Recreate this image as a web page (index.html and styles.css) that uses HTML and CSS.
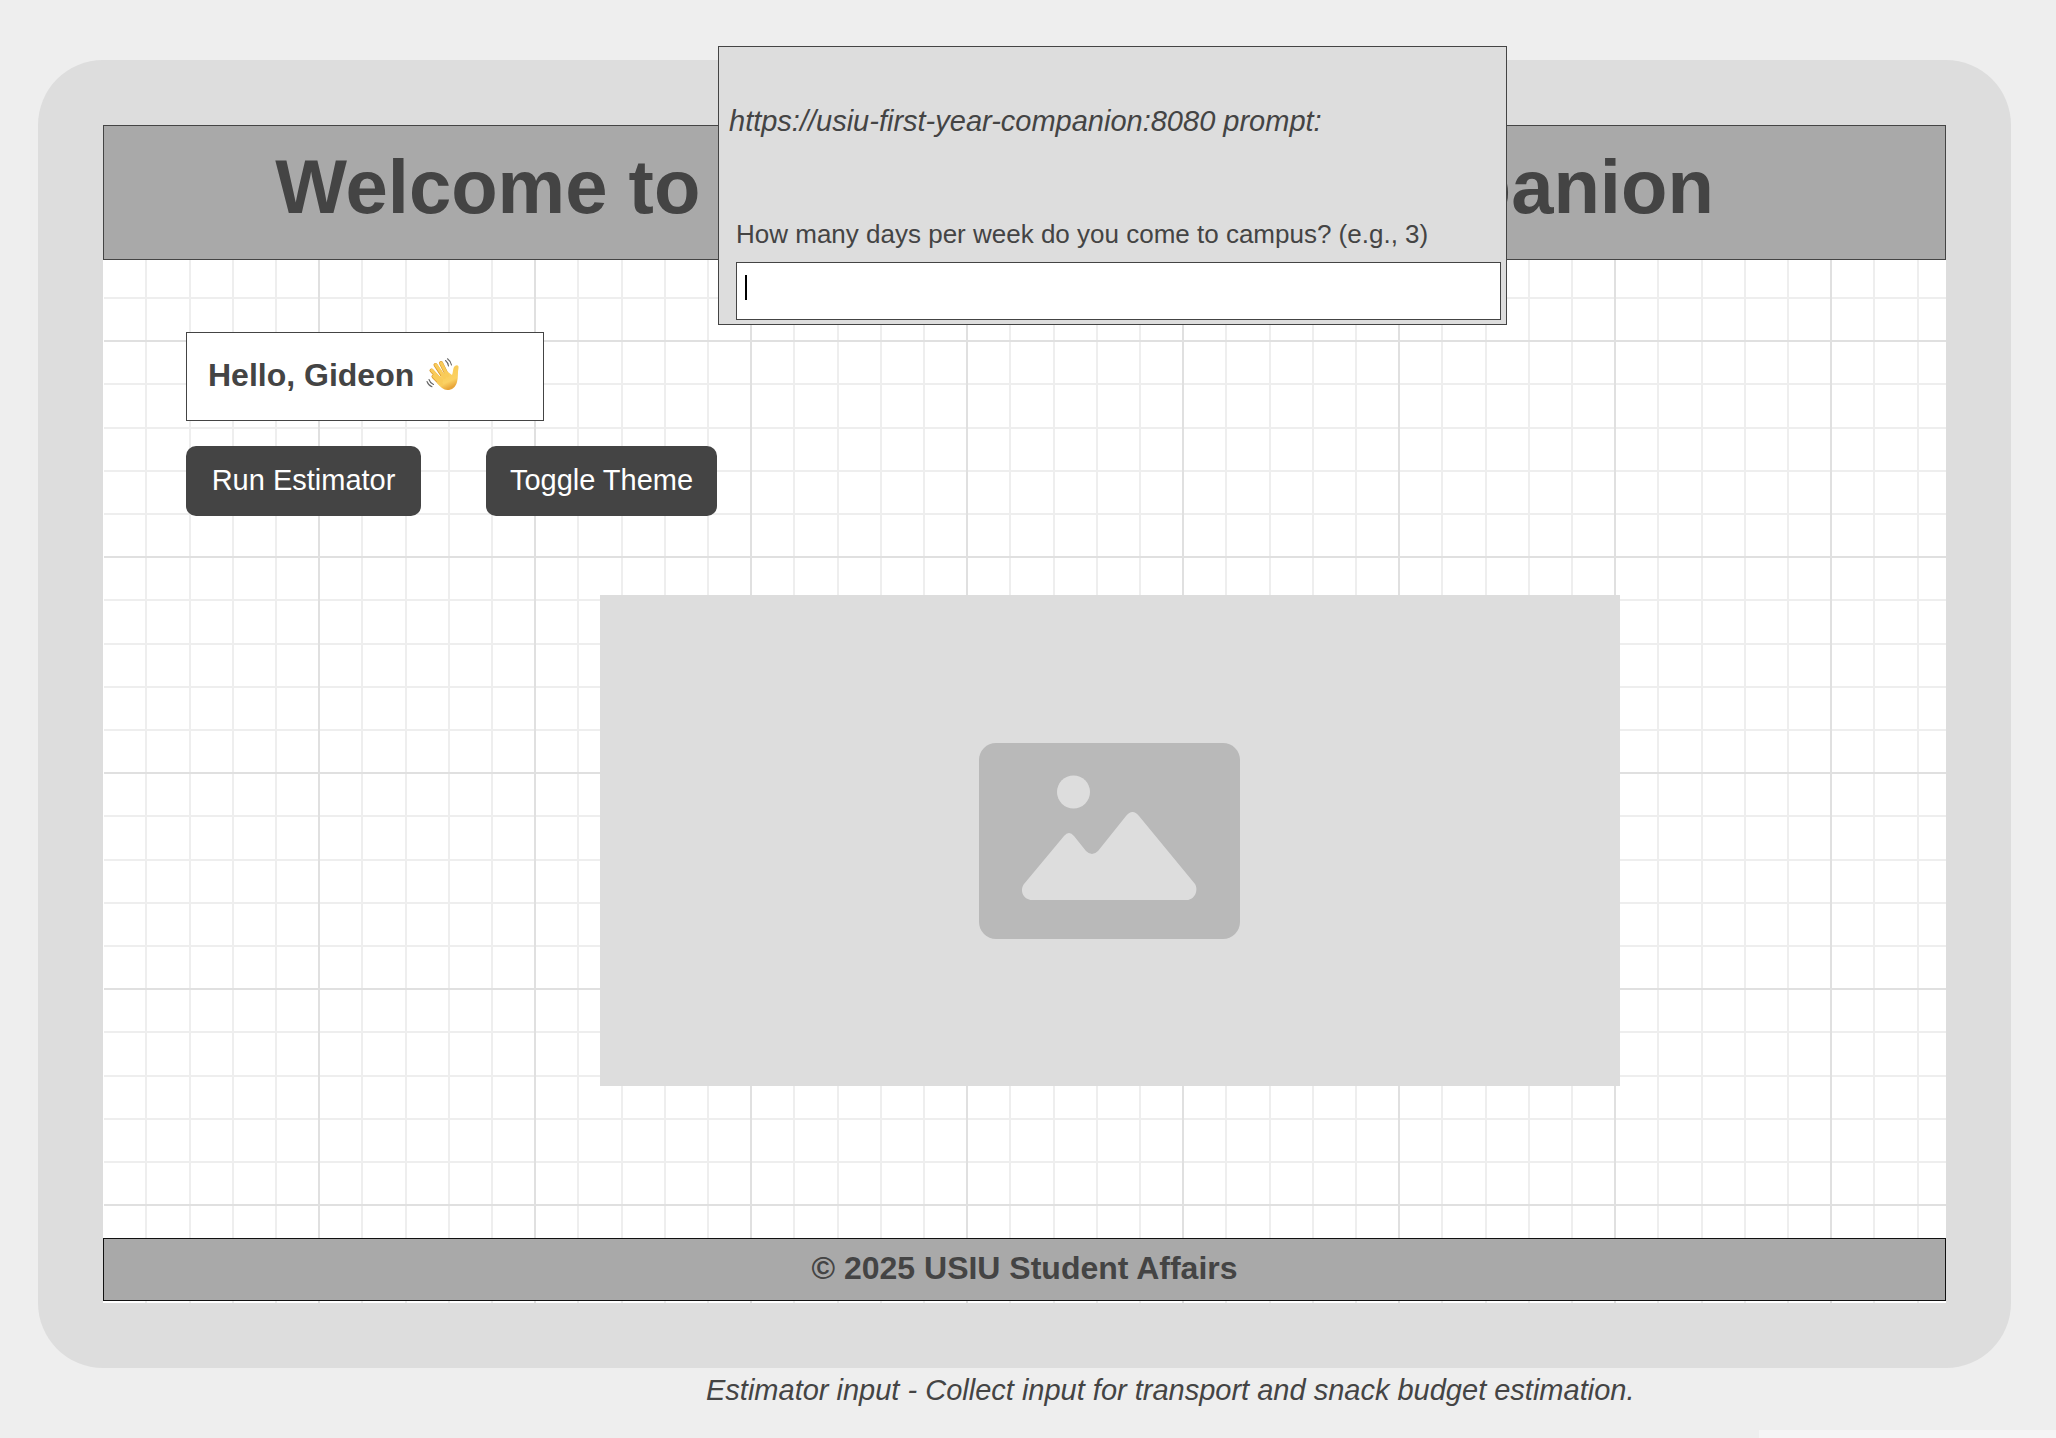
FILE: index.html
```html
<!DOCTYPE html>
<html lang="en">
<head>
<meta charset="utf-8">
<title>USIU First-Year Companion</title>
<link rel="stylesheet" href="styles.css">
</head>
<body>
<div class="frame">
  <div class="screen">
    <header class="banner"><h1>Welcome to USIU First-Year Companion</h1></header>
    <main class="content">
      <div class="greeting">
        <h2>Hello, Gideon</h2>
        <svg class="wave" viewBox="0 0 34 34" role="img" aria-label="Waving hand">
          <defs>
            <linearGradient id="skin" x1="0" y1="0" x2="0.4" y2="1">
              <stop offset="0" stop-color="#f8c850"/>
              <stop offset="0.75" stop-color="#fbd163"/>
              <stop offset="1" stop-color="#e8a538"/>
            </linearGradient>
          </defs>
          <path d="M15 26 L7.500 18.500 M15 23 L5.500 12.500 M18 20 L9.500 7 M21 17 L15 5" stroke="#d9992f" stroke-width="4" stroke-linecap="round" fill="none"/>
          <path d="M11.500 23 L16 16 L22 14 L26 17 C27.500 14 26.500 10 29 8 C31 6.500 33 7.500 32.500 10 C31.500 14 32.500 19 31 24 C29.500 29.500 26 32 21.500 32 C17.500 32 14.500 29 11 25 Z" fill="url(#skin)"/>
          <path d="M15.500 26 L7.800 18.300 M15.500 22.500 L5.900 12.300 M18.500 19.500 L9.900 6.900 M21.500 17.500 L15.200 5.100" stroke="#f9cb59" stroke-width="3.200" stroke-linecap="round" fill="none"/>
          <path d="M19.500 2.500 Q22 4.500 22.500 8 M21.500 0.800 Q25 3.500 25.500 7 M3 21.500 Q4 25 7.500 26.500 M1 23.500 Q2.500 27.500 6 28.800" stroke="#666" stroke-width="1.100" stroke-linecap="round" fill="none"/>
        </svg>
      </div>
      <div class="actions">
        <button class="btn btn-run" type="button">Run Estimator</button>
        <button class="btn btn-theme" type="button">Toggle Theme</button>
      </div>
      <div class="picture">
        <svg class="picture-icon" viewBox="0 0 261 196" aria-hidden="true">
          <rect width="261" height="196" rx="17" fill="#b9b9b9"/>
          <circle cx="94.500" cy="49" r="16.500" fill="#ddd"/>
          <path d="M45 141 L85 93 Q90 87 95 93 L107 108 Q113 114 119 108 L147 73 Q153.500 65 160 73 L216 141 C220 148 215 157 208 157 L53 157 C45 157 40 148 45 141 Z" fill="#ddd"/>
        </svg>
      </div>
    </main>
    <footer class="site-footer">© 2025 USIU Student Affairs</footer>
  </div>
  <form class="prompt" role="dialog" aria-labelledby="prompt-title">
    <p class="prompt-title" id="prompt-title">https://usiu-first-year-companion:8080 prompt:</p>
    <label class="prompt-label" for="days">How many days per week do you come to campus? (e.g., 3)</label>
    <div class="field">
      <input class="field-input" id="days" type="text">
      <span class="field-caret"></span>
    </div>
  </form>
</div>
<p class="caption">Estimator input - Collect input for transport and snack budget estimation.</p>
<div class="corner-tab"></div>
</body>
</html>
```
FILE: styles.css
```css
* {
  box-sizing: border-box;
}

body {
  margin: 0;
  min-height: 100vh;
  display: flex;
  flex-direction: column;
  background: #eee;
  color: #444;
  font-family: "Liberation Sans", Arial, sans-serif;
}

h1,
h2,
p {
  margin: 0;
}

.frame {
  position: relative;
  margin: 60px 45px 0 38px;
  padding: 65px;
  border-radius: 65px;
  background: #ddd;
}

/* Graph paper: 216px major squares, each split in five */
.screen {
  padding-bottom: 2px;
  background-color: #fff;
  background-image:
    linear-gradient(#fff, #fff),
    linear-gradient(#e0e0e0 1px, transparent 1px 215px, #e0e0e0 215px),
    linear-gradient(90deg, #e0e0e0 1px, transparent 1px 215px, #e0e0e0 215px),
    linear-gradient(transparent 42px, #eee 42px 44px, transparent 44px 86px, #eee 86px 88px, transparent 88px 129px, #eee 129px 131px, transparent 131px 172px, #eee 172px 174px, transparent 174px),
    linear-gradient(90deg, transparent 42px, #eee 42px 44px, transparent 44px 86px, #eee 86px 88px, transparent 88px 129px, #eee 129px 131px, transparent 131px 172px, #eee 172px 174px, transparent 174px);
  background-size: 1px 100%, 216px 216px, 216px 216px, 216px 216px, 216px 216px;
  background-repeat: no-repeat, repeat, repeat, repeat, repeat;
}

.banner {
  padding: 17px 60px 28px 0;
  border: 1px solid #444;
  background: #a9a9a9;
  text-align: center;
}

.banner h1 {
  font-size: 76px;
  line-height: 88px;
}

.content {
  padding: 72px 326px 152px 83px;
}

.greeting {
  display: flex;
  align-items: center;
  gap: 12px;
  width: 358px;
  height: 89px;
  padding: 0 21px 4px;
  border: 1px solid #444;
  background: #fff;
}

.greeting h2 {
  font-size: 32px;
  line-height: 40px;
}

.wave {
  width: 34px;
  height: 34px;
}

.actions {
  display: flex;
  gap: 65px;
  margin-top: 25px;
}

.btn {
  height: 70px;
  padding: 0 0 2px;
  border: 0;
  border-radius: 10px;
  background: #444;
  color: #fff;
  font-family: inherit;
  font-size: 29px;
  line-height: 34px;
}

.btn-run {
  width: 235px;
}

.btn-theme {
  width: 231px;
}

.picture {
  display: flex;
  align-items: center;
  justify-content: center;
  height: 491px;
  margin: 79px 0 0 414px;
  padding-right: 2px;
  background: #ddd;
}

.picture-icon {
  width: 261px;
  height: 196px;
}

.site-footer {
  padding: 11px 0 14px;
  border: 1px solid #111;
  background: #a9a9a9;
  font-size: 32px;
  font-weight: bold;
  line-height: 36px;
  text-align: center;
}

/* Browser prompt floating over the page */
.prompt {
  position: absolute;
  top: -14px;
  left: 680px;
  width: 789px;
  padding: 57px 5px 4px 17px;
  border: 1px solid #444;
  background: #ddd;
}

.prompt-title {
  margin: 0 0 81px -7px;
  font-size: 29px;
  font-style: italic;
  line-height: 34px;
}

.prompt-label {
  display: block;
  margin-bottom: 13px;
  font-size: 26px;
  line-height: 30px;
}

.field {
  position: relative;
}

.field-input {
  display: block;
  width: 100%;
  height: 58px;
  padding: 0 8px;
  border: 1px solid #444;
  background: #fff;
  color: #444;
  font-family: inherit;
  font-size: 26px;
}

.field-caret {
  position: absolute;
  top: 13px;
  left: 9px;
  width: 2px;
  height: 25px;
  background: #000;
}

.caption {
  margin-top: 5px;
  padding-left: 706px;
  font-size: 29px;
  font-style: italic;
  line-height: 34px;
}

.corner-tab {
  align-self: flex-end;
  width: 297px;
  height: 8px;
  margin-top: auto;
  background: #f5f5f5;
}
```
